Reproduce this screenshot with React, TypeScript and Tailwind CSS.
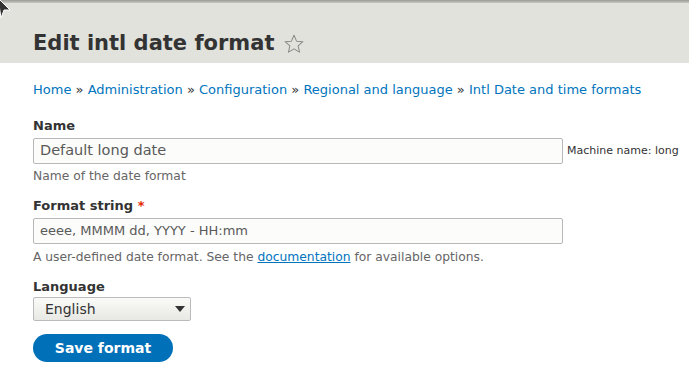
import React from "react";

export default function App() {
  return (
    <div className="relative w-[689px] h-[374px] overflow-hidden bg-white" style={{ fontFamily: '"DejaVu Sans", sans-serif' }}>
      {/* top strip */}
      <div className="h-[3px] bg-gradient-to-b from-[#9a9a96] to-[#c8c8c2]" />
      {/* header */}
      <div className="h-[60px] bg-[#e1e2dc] pl-[33px] pt-[25px]">
        <h1 className="flex items-center text-[21px] leading-[30px] font-bold text-[#333]">
          Edit intl date format
          <svg width="22" height="22" viewBox="0 0 24 24" className="ml-[9px] mt-[1px]">
            <path d="M12 2.5l2.8 6.4 6.9.6-5.2 4.6 1.6 6.8L12 17.3l-6.1 3.6 1.6-6.8L2.3 9.5l6.9-.6z" fill="none" stroke="#8a8a86" strokeWidth="1.1" strokeLinejoin="round" />
          </svg>
        </h1>
      </div>
      {/* cursor */}
      <svg className="absolute left-0 top-0" width="14" height="20" viewBox="0 0 14 20">
        <path d="M-2 -2 L10 10 L4 10 L1 18 Z" fill="#333" stroke="#fff" strokeWidth="1" />
      </svg>

      <div className="pl-[33px]">
        <div className="pt-[19px] text-[13px] leading-[16px] text-[#0074bd]">
          Home <span className="text-[#333]">»</span> Administration <span className="text-[#333]">»</span> Configuration <span className="text-[#333]">»</span> Regional and language <span className="text-[#333]">»</span> Intl Date and time formats
        </div>

        <div className="mt-[20px]">
          <div className="text-[13px] leading-[16px] font-bold text-[#333]">Name</div>
          <div className="mt-[4px] flex items-center">
            <div className="w-[530px] h-[26px] border border-[#b8b8b8] rounded-[2px] bg-[#fcfcfa] px-[6px] flex items-center text-[14.5px] text-[#595959]">
              Default long date
            </div>
            <span className="ml-[4px] text-[11px] text-[#333]">Machine name: long</span>
          </div>
          <div className="mt-[4px] text-[12.3px] leading-[16px] text-[#666]">Name of the date format</div>
        </div>

        <div className="mt-[14px]">
          <div className="text-[13px] leading-[16px] font-bold text-[#333]">
            Format string <span className="text-[#e32700]">*</span>
          </div>
          <div className="mt-[4px] w-[530px] h-[26px] border border-[#b8b8b8] rounded-[2px] bg-[#fcfcfa] px-[6px] flex items-center text-[13px] text-[#595959]">
            eeee, MMMM dd, YYYY - HH:mm
          </div>
          <div className="mt-[5px] text-[12.3px] leading-[16px] text-[#666]">
            A user-defined date format. See the <span className="text-[#0074bd] underline">documentation</span> for available options.
          </div>
        </div>

        <div className="mt-[14px]">
          <div className="text-[13px] leading-[16px] font-bold text-[#333]">Language</div>
          <div className="mt-[2px] w-[158px] h-[24px] border border-[#bbb] rounded-[2px] bg-gradient-to-b from-[#fafaf8] to-[#e8e8e4] flex items-center justify-between pl-[11px] pr-[5px] text-[14px] text-[#333]">
            English
            <svg width="10" height="6" viewBox="0 0 10 6"><path d="M0 0 L10 0 L5 6 Z" fill="#333" /></svg>
          </div>
        </div>

        <div className="mt-[13px] w-[140px] h-[28px] rounded-full bg-[#0071b8] flex items-center justify-center text-[14px] font-bold text-white">
          Save format
        </div>
      </div>
    </div>
  );
}
